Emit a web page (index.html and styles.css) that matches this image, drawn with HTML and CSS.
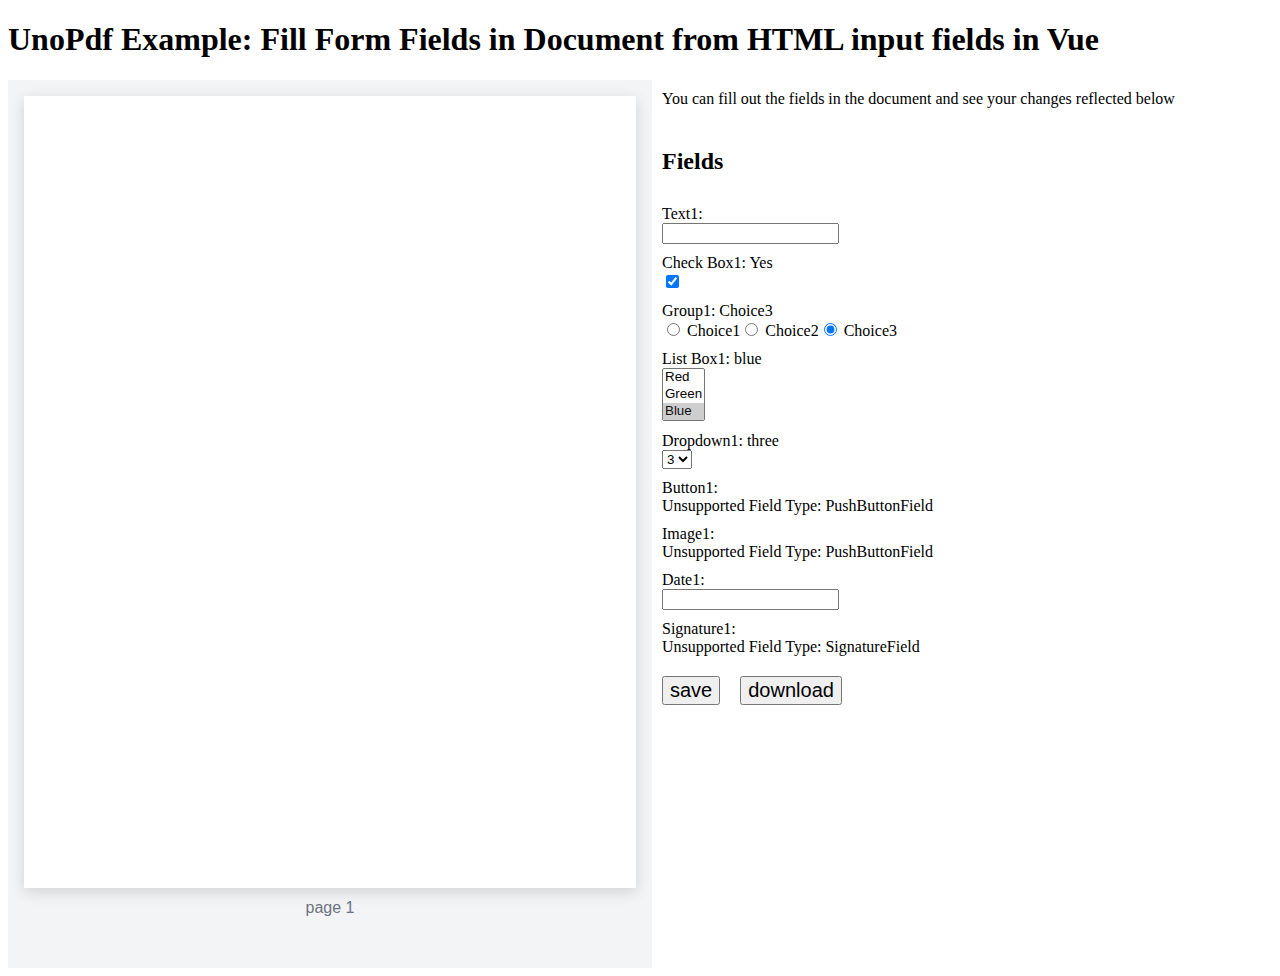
FILE: index.html
```html
<!DOCTYPE html>
<html>
<head>
<meta charset="utf-8">
<title>UnoPdf Example</title>
<link rel="stylesheet" href="styles.css">
</head>
<body>
<h1 class="title">UnoPdf Example: Fill Form Fields in Document from HTML input fields in Vue</h1>
<div class="layout">
  <div class="viewer">
    <div class="page"></div>
    <div class="page-label">page 1</div>
  </div>
  <div class="form">
    <p class="intro">You can fill out the fields in the document and see your changes reflected below</p>
    <h2 class="fields-title">Fields</h2>
    <div class="field">
      <div class="field-label">Text1:</div>
      <input class="text-input" type="text">
    </div>
    <div class="field">
      <div class="field-label">Check Box1: Yes</div>
      <input class="check" type="checkbox" checked>
    </div>
    <div class="field">
      <div class="field-label">Group1: Choice3</div>
      <div class="radio-row"><input class="radio" type="radio" name="g1"> Choice1<input class="radio" type="radio" name="g1"> Choice2<input class="radio" type="radio" name="g1" checked> Choice3</div>
    </div>
    <div class="field">
      <div class="field-label">List Box1: blue</div>
      <select class="listbox" size="3">
        <option>Red</option>
        <option>Green</option>
        <option selected>Blue</option>
      </select>
    </div>
    <div class="field">
      <div class="field-label">Dropdown1: three</div>
      <select class="dropdown">
        <option>1</option>
        <option>2</option>
        <option selected>3</option>
      </select>
    </div>
    <div class="field">
      <div class="field-label">Button1:</div>
      <div class="unsupported">Unsupported Field Type: PushButtonField</div>
    </div>
    <div class="field">
      <div class="field-label">Image1:</div>
      <div class="unsupported">Unsupported Field Type: PushButtonField</div>
    </div>
    <div class="field">
      <div class="field-label">Date1:</div>
      <input class="text-input" type="text">
    </div>
    <div class="field">
      <div class="field-label">Signature1:</div>
      <div class="unsupported">Unsupported Field Type: SignatureField</div>
    </div>
    <div class="actions">
      <button class="btn">save</button>
      <button class="btn">download</button>
    </div>
  </div>
</div>
</body>
</html>
```

FILE: styles.css
```css
body {
  margin: 0;
  padding: 8px;
  font-family: "Liberation Serif", "Times New Roman", serif;
  font-size: 16px;
  color: #000;
  background: #fff;
}

.title {
  font-size: 32px;
  font-weight: bold;
  margin: 13.44px 0 21.44px;
}

.layout {
  display: flex;
  align-items: flex-start;
}

.viewer {
  background: #f3f4f6;
  padding: 16px;
  height: calc(100vh - 88px);
  box-sizing: border-box;
  flex: none;
}

.page {
  width: 612px;
  height: 792px;
  background: #fff;
  box-shadow: 0 4px 14px rgba(0, 0, 0, 0.14);
}

.page-label {
  margin-top: 11px;
  text-align: center;
  font-family: "Liberation Sans", Arial, sans-serif;
  font-size: 16px;
  color: #6b7280;
}

.form {
  padding: 10px 10px;
}

.intro {
  margin: 0;
}

.fields-title {
  font-size: 24px;
  font-weight: bold;
  margin: 40px 0 30px;
}

.field {
  margin-bottom: 10px;
}

.text-input,
.listbox,
.dropdown {
  font-family: "Liberation Sans", Arial, sans-serif;
  font-size: 13.33px;
}

.text-input {
  margin: 0;
  width: 177px;
  height: 21px;
  box-sizing: border-box;
}

.check {
  margin: 3px 3px 3px 4px;
}

.radio {
  margin: 3px 3px 0 5px;
}

.listbox {
  margin: 0;
}

.dropdown {
  margin: 0;
}

.actions {
  margin-top: 20px;
  display: flex;
  gap: 20px;
}

.btn {
  font-family: "Liberation Sans", Arial, sans-serif;
  font-size: 20px;
  margin: 0;
}
```
